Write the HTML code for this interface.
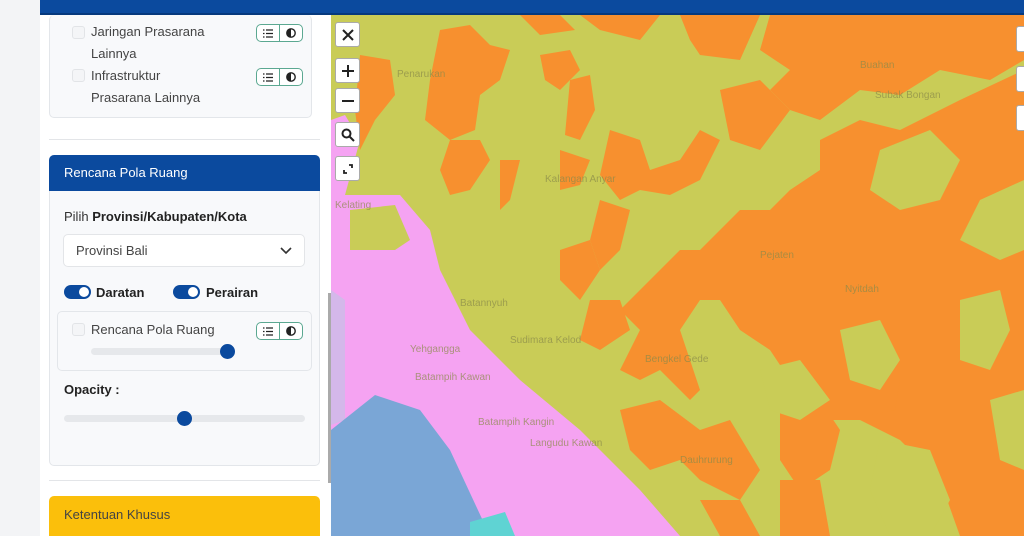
<!DOCTYPE html>
<html><head><meta charset="utf-8"><style>
*{box-sizing:border-box;margin:0;padding:0}
body{width:1024px;height:536px;overflow:hidden;background:#f3f4f6;font-family:"Liberation Sans",sans-serif;position:relative;color:#333}
.hdr{position:absolute;left:40px;top:0;width:984px;height:15px;background:#0b4a9e;border-bottom:2px solid #06397d}
.side{position:absolute;left:40px;top:15px;width:291px;height:521px;background:#fff}
.card{position:absolute;border:1px solid #e3e6ea;border-radius:5px;background:#f8f9fb}
.t{position:absolute;font-size:13px;color:#444}
.cb{position:absolute;width:13px;height:13px;border:1px solid #e2e4e7;border-radius:3px;background:#f4f5f7}
.btns{position:absolute;width:47px;height:18px;border:1px solid #5ba891;border-radius:5px;background:#fff;display:flex}
.btns span{flex:1;display:flex;align-items:center;justify-content:center}
.btns span:first-child{border-right:1px solid #5ba891}
.tog{position:absolute;width:27px;height:14px;border-radius:7px;background:#0b4a9e}
.tog:after{content:"";position:absolute;right:2px;top:2px;width:10px;height:10px;border-radius:50%;background:#fff}
.mc{position:absolute;left:335px;width:25px;height:25px;background:#fff;border:1px solid #aaa;border-radius:3px;display:flex;align-items:center;justify-content:center}
.rc{position:absolute;left:1016px;width:12px;height:26px;background:#fff;border:1px solid #aaa;border-radius:3px}
</style></head><body>
<svg style="position:absolute;left:331px;top:15px" width="693" height="521" viewBox="331 15 693 521">
<rect x="331" y="15" width="693" height="521" fill="#c9cc57"/>
<g fill="#f7902f">
<polygon points="520,15 560,15 575,30 540,35"/>
<polygon points="580,15 660,15 640,40 600,30"/>
<polygon points="680,15 760,15 740,60 700,55 690,40"/>
<polygon points="770,15 1024,15 1024,60 990,80 940,70 900,95 860,90 820,120 790,110 770,90 790,70 760,50"/>
<polygon points="440,30 470,25 490,45 510,50 500,80 480,95 475,130 450,140 425,120 430,80"/>
<polygon points="360,55 390,60 395,95 375,120 360,150 355,110"/>
<polygon points="540,55 570,50 580,70 560,90 545,80"/>
<polygon points="570,80 590,75 595,110 580,140 565,135"/>
<polygon points="450,140 480,140 490,160 470,190 450,195 440,170"/>
<polygon points="500,160 520,160 510,200 500,210"/>
<polygon points="560,150 590,160 580,185 560,190"/>
<polygon points="610,130 640,140 650,170 680,160 700,130 720,140 700,180 670,195 640,190 620,200 600,175"/>
<polygon points="720,90 760,80 790,110 760,150 730,140"/>
<polygon points="820,140 860,120 900,130 960,100 1024,70 1024,180 980,200 960,240 1000,260 1024,250 1024,536 960,536 940,480 900,440 860,420 820,420 790,380 770,350 740,330 720,300 700,300 680,330 690,360 700,390 690,400 660,370 640,380 620,370 640,330 620,310 640,290 660,270 680,250 700,250 720,230 740,210 770,210 790,190 820,170"/>
<polygon points="600,200 630,210 620,250 600,270 590,240"/>
<polygon points="560,250 590,240 600,270 580,300 560,280"/>
<polygon points="590,300 620,300 630,330 600,350 580,340"/>
<polygon points="780,410 820,400 840,430 830,470 800,490 780,460"/>
<polygon points="620,410 660,400 700,430 730,420 760,470 740,500 700,480 680,460 650,470 630,450"/>
<polygon points="780,480 820,480 830,536 780,536"/>
<polygon points="700,500 740,500 760,536 720,536"/>
<polygon points="870,380 900,380 895,410 870,415"/>
</g>
<g fill="#c9cc57">
<polygon points="880,150 930,130 960,160 940,200 900,210 870,190"/>
<polygon points="960,300 1000,290 1010,330 990,370 960,360"/>
<polygon points="840,330 880,320 900,360 880,390 850,380"/>
<polygon points="760,370 800,360 830,400 800,420 770,410"/>
<polygon points="880,440 930,450 950,500 930,536 890,536 870,490"/>
<polygon points="990,400 1024,390 1024,470 1000,460"/>
</g>
<polygon fill="#f5a3f2" points="331,120 345,115 360,140 345,195 400,195 430,230 440,270 470,330 520,380 580,430 640,490 680,536 331,536"/>
<polygon fill="#c9cc57" points="350,210 395,205 410,240 395,250 350,250"/>
<polygon fill="#d4b8ea" points="331,290 345,300 345,420 331,425"/>
<polygon fill="#7aa6d6" points="331,430 375,395 420,410 450,450 490,536 331,536"/>
<polygon fill="#5fd3d3" points="470,522 505,512 515,536 470,536"/>
<g font-size="10" fill="#8a8a4a" opacity=".7"><text x="397" y="77">Penarukan</text><text x="545" y="182">Kalangan Anyar</text><text x="460" y="306">Batannyuh</text><text x="510" y="343">Sudimara Kelod</text><text x="645" y="362">Bengkel Gede</text><text x="760" y="258">Pejaten</text><text x="845" y="292">Nyitdah</text><text x="478" y="425">Batampih Kangin</text><text x="530" y="446">Langudu Kawan</text><text x="680" y="463">Dauhrurung</text><text x="415" y="380">Batampih Kawan</text><text x="410" y="352">Yehgangga</text><text x="335" y="208">Kelating</text><text x="860" y="68">Buahan</text><text x="875" y="98">Subak Bongan</text></g>
</svg>
<div class="mc" style="top:22px"><svg width="14" height="14"><path d="M2 2L12 12M12 2L2 12" stroke="#222" stroke-width="2"/></svg></div>
<div class="mc" style="top:58px"><svg width="14" height="14"><path d="M7 1V13M1 7H13" stroke="#222" stroke-width="2"/></svg></div>
<div class="mc" style="top:88px"><svg width="14" height="14"><path d="M1 7H13" stroke="#222" stroke-width="2"/></svg></div>
<div class="mc" style="top:122px"><svg width="14" height="14"><circle cx="5.5" cy="5.5" r="4" fill="none" stroke="#222" stroke-width="2"/><path d="M8.5 8.5L13 13" stroke="#222" stroke-width="2"/></svg></div>
<div class="mc" style="top:156px"><svg width="14" height="14"><path d="M8 3H11V6M3 8V11H6" stroke="#222" stroke-width="1.8" fill="none"/></svg></div>
<div class="rc" style="top:26px"></div><div class="rc" style="top:66px"></div><div class="rc" style="top:105px"></div>
<div class="hdr"></div>
<div class="side">
 <div class="card" style="left:9px;top:0;width:263px;height:103px;border-top:none"></div>
 <div class="cb" style="left:32px;top:11px"></div><div class="t" style="left:51px;top:9px">Jaringan Prasarana</div><div class="t" style="left:51px;top:31px">Lainnya</div>
 <div class="btns" style="left:216px;top:9px"><span><svg width="10" height="9"><path d="M0 1H1.5M3 1H10M0 4.5H1.5M3 4.5H10M0 8H1.5M3 8H10" stroke="#222" stroke-width="1.3"/></svg></span><span><svg width="10" height="10"><circle cx="5" cy="5" r="4.2" fill="none" stroke="#222" stroke-width="1.4"/><path d="M5 1A4 4 0 0 0 5 9Z" fill="#222"/></svg></span></div>
 <div class="cb" style="left:32px;top:54px"></div><div class="t" style="left:51px;top:53px">Infrastruktur</div><div class="t" style="left:51px;top:75px">Prasarana Lainnya</div>
 <div class="btns" style="left:216px;top:53px"><span><svg width="10" height="9"><path d="M0 1H1.5M3 1H10M0 4.5H1.5M3 4.5H10M0 8H1.5M3 8H10" stroke="#222" stroke-width="1.3"/></svg></span><span><svg width="10" height="10"><circle cx="5" cy="5" r="4.2" fill="none" stroke="#222" stroke-width="1.4"/><path d="M5 1A4 4 0 0 0 5 9Z" fill="#222"/></svg></span></div>
 <div style="position:absolute;left:9px;top:124px;width:271px;height:1px;background:#e3e5e8"></div>
 <div class="card" style="left:9px;top:140px;width:271px;height:311px"></div>
 <div style="position:absolute;left:9px;top:140px;width:271px;height:36px;background:#0b4a9e;border-radius:5px 5px 0 0;color:#fff;font-size:13px;padding:10px 15px">Rencana Pola Ruang</div>
 <div class="t" style="left:24px;top:194px;color:#333">Pilih <b style="color:#222">Provinsi/Kabupaten/Kota</b></div>
 <div style="position:absolute;left:23px;top:219px;width:242px;height:33px;background:#fff;border:1px solid #e3e5e8;border-radius:5px;font-size:13px;color:#444;padding:8px 12px">Provinsi Bali<svg style="position:absolute;right:12px;top:12px" width="12" height="8"><path d="M1 1L6 6L11 1" stroke="#333" stroke-width="1.6" fill="none"/></svg></div>
 <div class="tog" style="left:24px;top:270px"></div><div class="t" style="left:56px;top:270px;font-weight:bold;color:#222">Daratan</div>
 <div class="tog" style="left:133px;top:270px"></div><div class="t" style="left:166px;top:270px;font-weight:bold;color:#222">Perairan</div>
 <div class="card" style="left:17px;top:296px;width:255px;height:60px"></div>
 <div class="cb" style="left:32px;top:308px"></div><div class="t" style="left:51px;top:307px">Rencana Pola Ruang</div>
 <div class="btns" style="left:216px;top:307px"><span><svg width="10" height="9"><path d="M0 1H1.5M3 1H10M0 4.5H1.5M3 4.5H10M0 8H1.5M3 8H10" stroke="#222" stroke-width="1.3"/></svg></span><span><svg width="10" height="10"><circle cx="5" cy="5" r="4.2" fill="none" stroke="#222" stroke-width="1.4"/><path d="M5 1A4 4 0 0 0 5 9Z" fill="#222"/></svg></span></div>
 <div style="position:absolute;left:51px;top:333px;width:143px;height:7px;border-radius:4px;background:#e6e8eb"></div>
 <div style="position:absolute;left:180px;top:329px;width:15px;height:15px;border-radius:50%;background:#0b4a9e"></div>
 <div class="t" style="left:24px;top:367px;font-weight:bold;color:#222">Opacity :</div>
 <div style="position:absolute;left:24px;top:400px;width:241px;height:7px;border-radius:4px;background:#e6e8eb"></div>
 <div style="position:absolute;left:137px;top:396px;width:15px;height:15px;border-radius:50%;background:#0b4a9e"></div>
 <div style="position:absolute;left:9px;top:465px;width:271px;height:1px;background:#e3e5e8"></div>
 <div style="position:absolute;left:9px;top:481px;width:271px;height:40px;background:#fbbf0b;border-radius:5px 5px 0 0;color:#444;font-size:13px;padding:11px 15px">Ketentuan Khusus</div>
 <div style="position:absolute;left:288px;top:278px;width:3px;height:190px;background:#aaa"></div>
</div>
</body></html>
